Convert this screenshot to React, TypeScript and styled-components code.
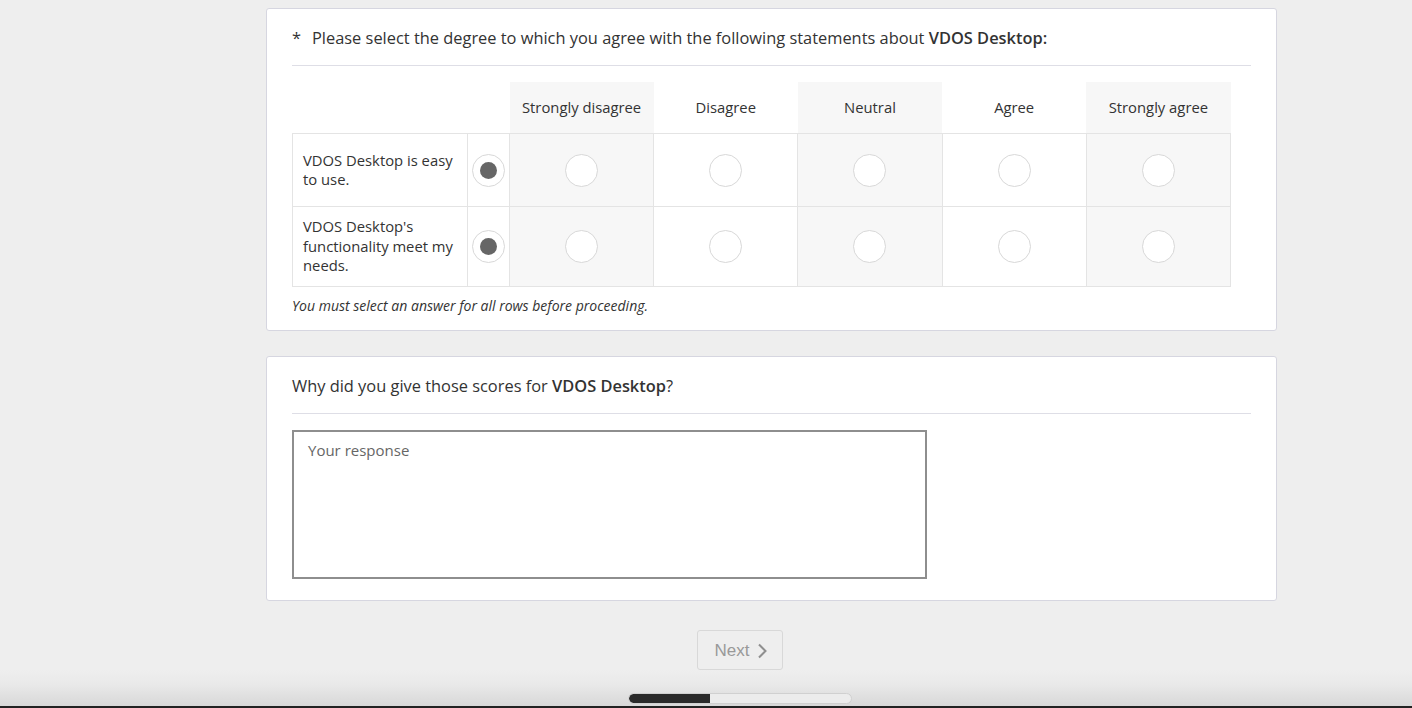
import React from "react";
import styled, { createGlobalStyle } from "styled-components";

const GlobalStyle = createGlobalStyle`
  html, body { margin: 0; padding: 0; background: #eeeeee; }
  body { font-family: "Open Sans", "Noto Sans", sans-serif; color: #333; overflow: hidden; }
`;

const Page = styled.div`
  width: 1412px;
  height: 708px;
  display: flex;
  flex-direction: column;
  background: #eeeeee;
`;

const Main = styled.div`
  padding: 8px 0 0 266px;
  display: flex;
  flex-direction: column;
  gap: 25px;
`;

const Card = styled.section<{ $h: number }>`
  box-sizing: border-box;
  width: 1011px;
  height: ${(p) => p.$h}px;
  background: #fff;
  border: 1px solid #d6d6e0;
  border-radius: 3px;
  padding: 0 25px;
  display: flex;
  flex-direction: column;
`;

const Title = styled.h2`
  margin: 0;
  padding: 17px 0 15px;
  font-size: 16.4px;
  line-height: 24px;
  font-weight: 400;
  color: #333;
  border-bottom: 1px solid #dedee6;
  display: flex;
  gap: 12px;
  b { font-weight: 600; }
`;

const Star = styled.span`
  width: 8px;
`;

const Matrix = styled.table`
  margin-top: 16px;
  width: 939px;
  table-layout: fixed;
  border-collapse: collapse;
  font-size: 14.8px;
  line-height: 19.5px;
  color: #333;
`;

const HeadCell = styled.th<{ $shade?: boolean }>`
  height: 51px;
  padding: 0;
  font-weight: 400;
  text-align: center;
  vertical-align: middle;
  background: ${(p) => (p.$shade ? "#f7f7f7" : "transparent")};
`;

const LabelCell = styled.td`
  border: 1px solid #e4e4e4;
  padding: 8px 10px;
  vertical-align: middle;
`;

const RadioCell = styled.td<{ $shade?: boolean; $h?: number }>`
  border: 1px solid #e4e4e4;
  padding: 0;
  height: ${(p) => p.$h ?? 72}px;
  text-align: center;
  vertical-align: middle;
  background: ${(p) => (p.$shade ? "#f7f7f7" : "#fff")};
`;

const Radio = styled.span<{ $checked?: boolean }>`
  box-sizing: border-box;
  display: inline-flex;
  align-items: center;
  justify-content: center;
  width: 33px;
  height: 33px;
  border-radius: 50%;
  border: 1px solid #d8d8d8;
  background: #fff;
  vertical-align: middle;
  &::after {
    content: "";
    display: ${(p) => (p.$checked ? "block" : "none")};
    width: 17px;
    height: 17px;
    border-radius: 50%;
    background: #666;
  }
`;

const Note = styled.p`
  margin: 9px 0 0;
  font-size: 14px;
  line-height: 19px;
  font-style: italic;
  color: #333;
`;

const ResponseBox = styled.textarea`
  box-sizing: border-box;
  margin-top: 16px;
  width: 635px;
  height: 149px;
  border: 2px solid #8e8e8e;
  border-radius: 0;
  padding: 8px 14px;
  font-family: "Open Sans", "Noto Sans", sans-serif;
  font-size: 15px;
  line-height: 20px;
  color: #333;
  resize: none;
  outline: none;
  &::placeholder { color: #666; }
`;

const ButtonRow = styled.div`
  margin-top: 29px;
  padding-left: 68px;
  display: flex;
  justify-content: center;
`;

const NextButton = styled.button`
  box-sizing: border-box;
  width: 86px;
  height: 40px;
  border: 1px solid #d8d8d8;
  border-radius: 3px;
  background: #eeeeee;
  color: #999;
  font-family: "Liberation Sans", Arial, sans-serif;
  font-size: 17px;
  display: flex;
  align-items: center;
  justify-content: center;
  gap: 8px;
  padding: 2px 0 0 2px;
`;

const Footer = styled.footer`
  box-sizing: border-box;
  height: 38px;
  padding: 23px 0 0 68px;
  display: flex;
  justify-content: center;
  background: linear-gradient(to bottom, #eeeeee 0%, #e9e9e9 40%, #d8d8d8 100%);
  border-bottom: 2px solid #222;
`;

const Progress = styled.div`
  box-sizing: border-box;
  width: 224px;
  height: 11px;
  border-radius: 6px;
  background: #ececec;
  border: 1px solid #d0d0d0;
  overflow: hidden;
  display: flex;
`;

const ProgressFill = styled.div`
  height: 100%;
  background: #2a2a2a;
  border-radius: 6px 0 0 6px;
`;

const columns = [
  { label: "Strongly disagree", shade: true },
  { label: "Disagree", shade: false },
  { label: "Neutral", shade: true },
  { label: "Agree", shade: false },
  { label: "Strongly agree", shade: true },
];

const rows = [
  { text: "VDOS Desktop is easy to use.", h: 72 },
  { text: "VDOS Desktop's functionality meet my needs.", h: 79 },
];

const Chevron = () => (
  <svg width="10" height="16" viewBox="0 0 10 16" aria-hidden="true">
    <polyline points="2,1.5 8.5,8 2,14.5" fill="none" stroke="#8f8f8f" strokeWidth="2" />
  </svg>
);

export default function App() {
  return (
    <Page>
      <GlobalStyle />
      <Main>
        <Card $h={323}>
          <Title>
            <Star>*</Star>
            <span>
              Please select the degree to which you agree with the following statements about <b>VDOS Desktop:</b>
            </span>
          </Title>
          <Matrix>
            <colgroup>
              <col style={{ width: 175 }} />
              <col style={{ width: 42 }} />
              {columns.map((c) => (
                <col key={c.label} />
              ))}
            </colgroup>
            <thead>
              <tr>
                <HeadCell />
                <HeadCell />
                {columns.map((c) => (
                  <HeadCell key={c.label} $shade={c.shade}>
                    {c.label}
                  </HeadCell>
                ))}
              </tr>
            </thead>
            <tbody>
              {rows.map((r) => (
                <tr key={r.text}>
                  <LabelCell>{r.text}</LabelCell>
                  <RadioCell $h={r.h}>
                    <Radio $checked />
                  </RadioCell>
                  {columns.map((c) => (
                    <RadioCell key={c.label} $shade={c.shade} $h={r.h}>
                      <Radio />
                    </RadioCell>
                  ))}
                </tr>
              ))}
            </tbody>
          </Matrix>
          <Note>You must select an answer for all rows before proceeding.</Note>
        </Card>
        <Card $h={245}>
          <Title>
            <span>
              Why did you give those scores for <b>VDOS Desktop</b>?
            </span>
          </Title>
          <ResponseBox placeholder="Your response" />
        </Card>
      </Main>
      <ButtonRow>
        <NextButton type="button">
          Next <Chevron />
        </NextButton>
      </ButtonRow>
      <div style={{ flex: 1 }} />
      <Footer>
        <Progress>
          <ProgressFill style={{ width: `${(82 / 224) * 100}%` }} />
        </Progress>
      </Footer>
    </Page>
  );
}
